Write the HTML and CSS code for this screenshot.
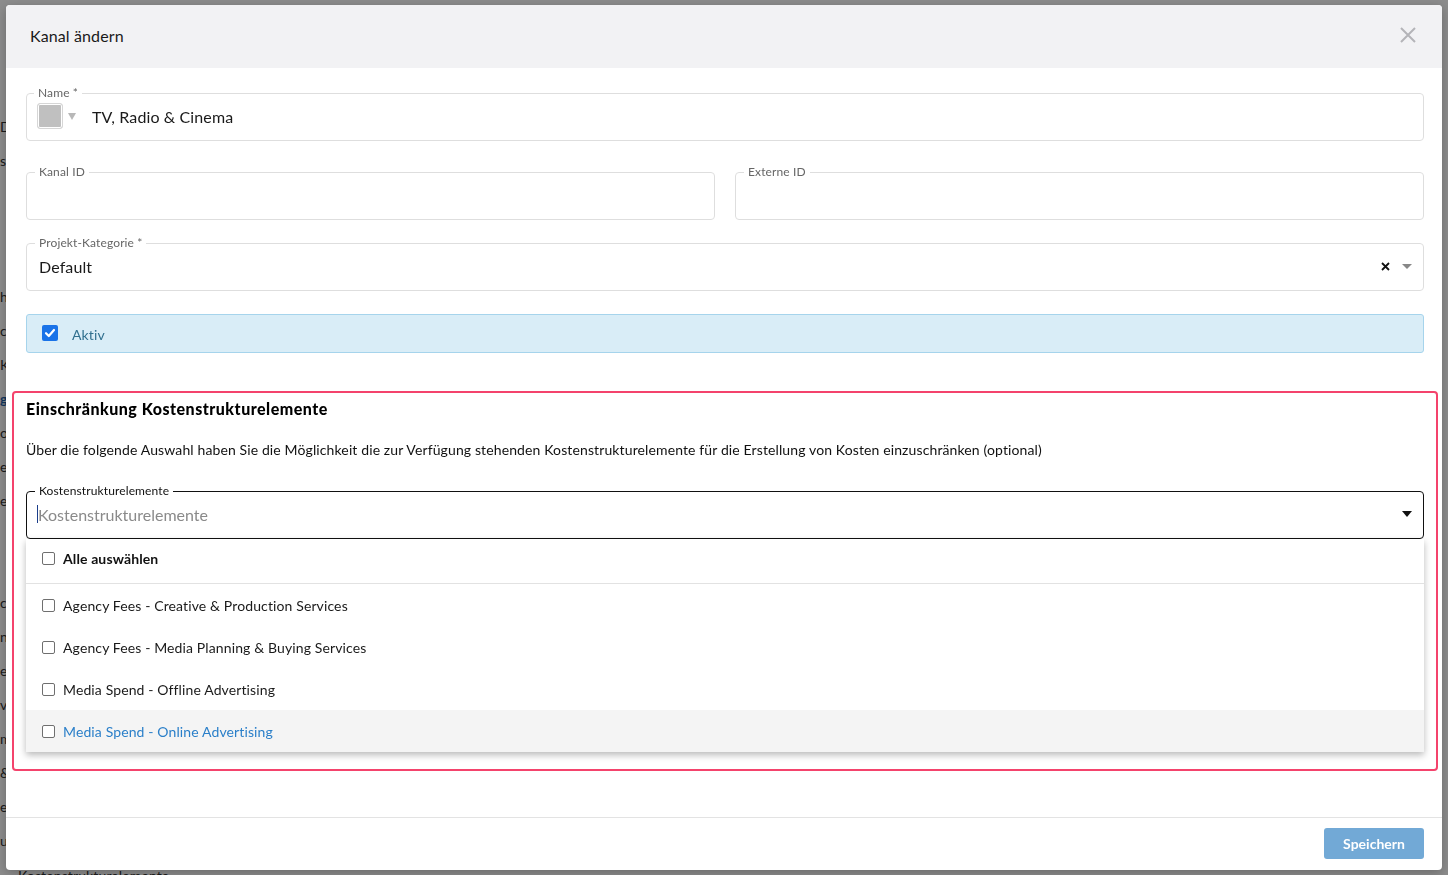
FILE: index.html
```html
<!DOCTYPE html>
<html lang="de">
<head>
<meta charset="utf-8">
<title>Kanal ändern</title>
<link rel="stylesheet" href="styles.css">
</head>
<body>
  <div class="page">
    <div class="page-col">
      <div class="page-row"></div><div class="page-row"></div><div class="page-row"></div>
      <div class="page-row">D</div>
      <div class="page-row">s</div>
      <div class="page-row"></div><div class="page-row"></div><div class="page-row"></div>
      <div class="page-row">h</div>
      <div class="page-row">ch</div>
      <div class="page-row">K</div>
      <div class="page-row link">g</div>
      <div class="page-row">or</div>
      <div class="page-row">e</div>
      <div class="page-row">er</div>
      <div class="page-row"></div><div class="page-row"></div>
      <div class="page-row">ch</div>
      <div class="page-row">n</div>
      <div class="page-row">ele</div>
      <div class="page-row">vo</div>
      <div class="page-row">m</div>
      <div class="page-row">&amp;</div>
      <div class="page-row">e</div>
      <div class="page-row">up</div>
      <div class="page-row tail">Kostenstrukturelemente</div>
    </div>
  </div>

  <div class="overlay"></div>

  <div class="modal">
    <header class="modal-header">
      <h1 class="modal-title">Kanal ändern</h1>
      <button class="close" type="button" aria-label="Schließen">
        <svg width="16" height="16" viewBox="0 0 16 16"><path d="M1 1L15 15M15 1L1 15" stroke="#b4b4b8" stroke-width="2" fill="none"/></svg>
      </button>
    </header>

    <div class="modal-body">
      <fieldset class="field field-name">
        <legend>Name *</legend>
        <div class="field-row">
          <span class="swatch"></span>
          <span class="swatch-caret"></span>
          <span class="value">TV, Radio &amp; Cinema</span>
        </div>
      </fieldset>

      <div class="two-col">
        <fieldset class="field">
          <legend>Kanal ID</legend>
          <div class="field-row"></div>
        </fieldset>
        <fieldset class="field">
          <legend>Externe ID</legend>
          <div class="field-row"></div>
        </fieldset>
      </div>

      <fieldset class="field field-cat">
        <legend>Projekt-Kategorie *</legend>
        <div class="field-row">
          <span class="value value-cat">Default</span>
          <span class="clear">
            <svg width="9" height="9" viewBox="0 0 9 9"><path d="M1 1L8 8M8 1L1 8" stroke="#111" stroke-width="1.8" fill="none"/></svg>
          </span>
          <span class="caret caret-grey"></span>
        </div>
      </fieldset>

      <label class="active-box">
        <span class="check-on">
          <svg width="12" height="12" viewBox="0 0 12 12"><path d="M2 6.2L4.8 9L10 3" stroke="#fff" stroke-width="2.2" fill="none" stroke-linecap="round" stroke-linejoin="round"/></svg>
        </span>
        <span class="active-text">Aktiv</span>
      </label>

      <section class="restrict">
        <h2 class="restrict-title">Einschränkung Kostenstrukturelemente</h2>
        <p class="restrict-text">Über die folgende Auswahl haben Sie die Möglichkeit die zur Verfügung stehenden Kostenstrukturelemente für die Erstellung von Kosten einzuschränken (optional)</p>

        <fieldset class="field field-focus">
          <legend>Kostenstrukturelemente</legend>
          <div class="field-row">
            <span class="text-cursor"></span>
            <span class="placeholder">Kostenstrukturelemente</span>
            <span class="caret caret-dark"></span>
          </div>
        </fieldset>

        <ul class="options">
          <li class="option option-all"><span class="box"></span>Alle auswählen</li>
          <li class="option"><span class="box"></span>Agency Fees - Creative &amp; Production Services</li>
          <li class="option"><span class="box"></span>Agency Fees - Media Planning &amp; Buying Services</li>
          <li class="option"><span class="box"></span>Media Spend - Offline Advertising</li>
          <li class="option option-hover"><span class="box"></span>Media Spend - Online Advertising</li>
        </ul>
      </section>
    </div>

    <footer class="modal-footer">
      <button class="btn-save" type="button">Speichern</button>
    </footer>
  </div>
</body>
</html>
```

FILE: styles.css
```css
* { box-sizing: border-box; }

html, body {
  margin: 0;
  height: 100%;
}

body {
  font-family: Lato, "Noto Sans", "Liberation Sans", sans-serif;
  letter-spacing: 0.12px;
  color: #1f1f1f;
  background: #fff;
  overflow: hidden;
}

/* page behind the dialog */
.page {
  height: 100%;
  background: #fff;
}

.page-col {
  display: flex;
  flex-direction: column;
  padding-top: 8px;
}

.page-row {
  height: 34px;
  line-height: 34px;
  font-size: 14px;
  color: #333;
  white-space: nowrap;
}

.page-row.link { color: #1d5fa8; font-weight: 700; }
.page-row.tail { padding-left: 18px; margin-top: 8px; line-height: 20px; height: 20px; }

.overlay {
  position: fixed;
  inset: 0;
  background: rgba(0, 0, 0, 0.45);
}

/* dialog */
.modal {
  position: fixed;
  left: 6px;
  top: 5px;
  width: 1436px;
  height: 865px;
  background: #fff;
  border-radius: 4px;
  display: flex;
  flex-direction: column;
  overflow: hidden;
  box-shadow: 0 3px 12px rgba(0, 0, 0, 0.25);
}

.modal-header {
  height: 63px;
  flex: none;
  background: #f2f2f4;
  display: flex;
  align-items: center;
  justify-content: space-between;
  padding: 0 26px 3px 24px;
}

.modal-title {
  margin: 0;
  font-size: 16px;
  font-weight: 400;
  color: #1a1a1a;
  margin-top: 1px;
}

.close {
  border: 0;
  background: none;
  padding: 0;
  width: 16px;
  height: 16px;
  display: flex;
}

.modal-body {
  flex: 1;
  padding: 18px 18px 0 20px;
}

/* outlined fields */
.field {
  margin: 0;
  border: 1px solid #dedede;
  border-radius: 4px;
  padding: 0 12px 8px;
  min-width: 0;
}

.field legend {
  font-size: 12px;
  line-height: 14px;
  color: #666;
  padding: 0 4px;
  margin-left: -4px;
}

.field-row {
  height: 32px;
  display: flex;
  align-items: center;
}

.field-name { margin-bottom: 24px; padding-left: 10px; }
.field-name legend { margin-left: -3px; }

.swatch {
  width: 26px;
  height: 26px;
  border: 1px solid #d6d6d6;
  border-radius: 3px;
  background: #c0c0c0;
  box-shadow: inset 0 0 0 1px #fff;
}

.swatch-caret {
  width: 0;
  height: 0;
  margin-left: 5px;
  border-left: 4px solid transparent;
  border-right: 4px solid transparent;
  border-top: 7px solid #b8b8b8;
}

.value {
  font-size: 16px;
  color: #1a1a1a;
}

.field-name .value { margin-left: 16px; }

.two-col {
  display: grid;
  grid-template-columns: 1fr 1fr;
  gap: 20px;
  margin-bottom: 16px;
}

.field-cat { margin-bottom: 23px; }
.value-cat { flex: 1; }

.clear { display: flex; margin-right: 12px; }

.caret {
  width: 0;
  height: 0;
  border-left: 5px solid transparent;
  border-right: 5px solid transparent;
  border-top: 5px solid #888;
  margin-right: -1px;
}

.caret-dark { border-top-color: #111; border-top-width: 6px; }

/* active toggle */
.active-box {
  display: flex;
  align-items: center;
  height: 39px;
  background: #d9edf7;
  border: 1px solid #a6d4ec;
  border-radius: 3px;
  padding-left: 15px;
  margin-bottom: 38px;
}

.check-on {
  width: 16px;
  height: 16px;
  border-radius: 2px;
  background: #1a73e8;
  display: flex;
  align-items: center;
  justify-content: center;
  margin-top: -2px;
}

.active-text {
  margin-left: 14px;
  font-size: 14px;
  color: #31708f;
  margin-top: 2px;
}

/* highlighted restriction section */
.restrict {
  margin: 0 -14px;
  border: 2px solid #f4436c;
  border-radius: 4px;
  padding: 6px 12px 17px;
}

.restrict-title {
  margin: 0;
  font-size: 16px;
  line-height: 20px;
  font-weight: 900;
  letter-spacing: 0.5px;
  color: #000;
}

.restrict-text {
  margin: 21px 0 24px;
  font-size: 14px;
  line-height: 20px;
  color: #111;
}

.field-focus {
  border-color: #111;
  padding-left: 10px;
}

.field-focus legend {
  color: #111;
  margin-left: -2px;
}

.text-cursor {
  width: 1px;
  height: 18px;
  background: #1a3d8a;
}

.placeholder {
  flex: 1;
  font-size: 16px;
  letter-spacing: 0;
  color: #8a8a8a;
}

/* option list */
.options {
  list-style: none;
  margin: 0;
  padding: 0;
  background: #fff;
  box-shadow: 0 3px 7px rgba(0, 0, 0, 0.28);
}

.option {
  height: 42px;
  display: flex;
  align-items: center;
  padding-left: 16px;
  font-size: 14px;
  color: #1a1a1a;
}

.option-all {
  height: 45px;
  padding-bottom: 5px;
  font-weight: 700;
  color: #111;
  border-bottom: 1px solid #e2e2e2;
}

.option-hover {
  background: #f4f4f4;
  color: #2a7fc9;
}

.box {
  width: 13px;
  height: 13px;
  border: 1px solid #6f6f6f;
  border-radius: 2px;
  background: #fff;
  margin-right: 8px;
}

/* footer */
.modal-footer {
  flex: none;
  height: 53px;
  border-top: 1px solid #e3e3e3;
  display: flex;
  justify-content: flex-end;
  align-items: flex-start;
  padding: 10px 18px 0 0;
}

.btn-save {
  width: 100px;
  height: 31px;
  border: 0;
  border-radius: 3px;
  background: #72a9d6;
  color: #fff;
  font-family: inherit;
  font-size: 14px;
  font-weight: 700;
}
```
